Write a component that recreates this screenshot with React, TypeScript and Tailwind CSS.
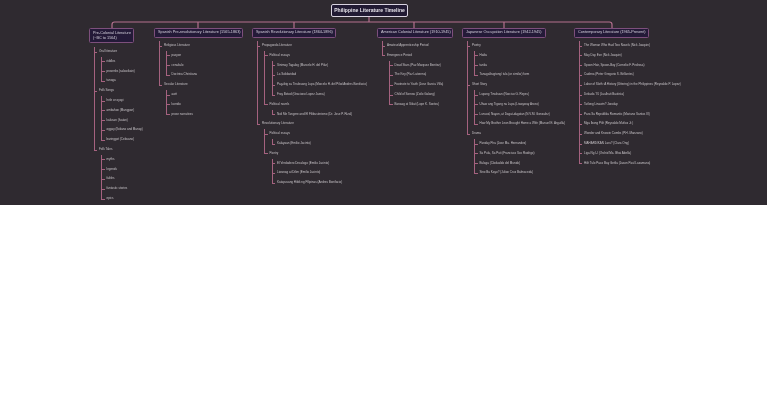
type Item = { label: string; children?: Item[] };
type Period = { title: string; items: Item[]; width: string; headerWidth: string; twoLine?: boolean };

const leaf = (...labels: string[]): Item[] => labels.map((label) => ({ label }));

const periods: Period[] = [
  {
    title: "Pre-Colonial Literature\n(~BC to 1564)",
    width: "w-[65px]",
    headerWidth: "w-[45px]",
    twoLine: true,
    items: [
      { label: "Oral literature", children: leaf("riddles", "proverbs (salawikain)", "tanaga") },
      {
        label: "Folk Songs",
        children: leaf("hele or oyayi", "ambahan (Mangyan)", "kalusan (Ivatan)", "oggay (Ilokano and Manay)", "baringgot (Cebuano)"),
      },
      { label: "Folk Tales", children: leaf("myths", "legends", "fables", "fantastic stories", "epics") },
    ],
  },
  {
    title: "Spanish Pre-revolutionary Literature (1565-1863)",
    width: "w-[98px]",
    headerWidth: "w-[89px]",
    items: [
      { label: "Religious Literature", children: leaf("pasyon", "cenakulo", "Doctrina Christiana") },
      { label: "Secular Literature", children: leaf("awit", "korrido", "prose narratives") },
    ],
  },
  {
    title: "Spanish Revolutionary Literature (1864-1896)",
    width: "w-[125px]",
    headerWidth: "w-[84px]",
    items: [
      {
        label: "Propaganda Literature",
        children: [
          {
            label: "Political essays",
            children: leaf(
              "Sinimay Tagalog (Marcelo H. del Pilar)",
              "La Solidaridad",
              "Pag-ibig sa Tinubuang Lupa (Marcelo H. del Pilar/Andres Bonifacio)",
              "Fray Botod (Graciano Lopez Jaena)",
            ),
          },
          { label: "Political novels", children: leaf("Noli Me Tangere and El Filibusterismo (Dr. Jose P. Rizal)") },
        ],
      },
      {
        label: "Revolutionary Literature",
        children: [
          { label: "Political essays", children: leaf("Kalayaan (Emilio Jacinto)") },
          {
            label: "Poetry",
            children: leaf(
              "El Verdadero Decalogo (Emilio Jacinto)",
              "Liwanag at Dilim (Emilio Jacinto)",
              "Katapusang Hibik ng Pilipinas (Andres Bonifacio)",
            ),
          },
        ],
      },
    ],
  },
  {
    title: "American Colonial Literature (1910-1945)",
    width: "w-[85px]",
    headerWidth: "w-[76px]",
    items: [
      { label: "Amateur/Apprenticeship Period" },
      {
        label: "Emergence Period",
        children: leaf(
          "Dead Stars (Paz Marquez Benitez)",
          "The Key (Paz Latorena)",
          "Footnote to Youth (Jose Garcia Villa)",
          "Child of Sorrow (Zoilo Galang)",
          "Banaag at Sikat (Lope K. Santos)",
        ),
      },
    ],
  },
  {
    title: "Japanese Occupation Literature (1942-1945)",
    width: "w-[112px]",
    headerWidth: "w-[84px]",
    items: [
      { label: "Poetry", children: leaf("Haiku", "tanka", "Tanaga/bugtong/ tula (or similar) form") },
      {
        label: "Short Story",
        children: leaf(
          "Lupang Tinubuan (Narciso G. Reyes)",
          "Uhaw ang Tigang na Lupa (Liwayway Arceo)",
          "Lunsod, Nayon, at Dagat-dagatan (N.V.M. Gonzalez)",
          "How My Brother Leon Brought Home a Wife (Manuel E. Arguilla)",
        ),
      },
      {
        label: "Drama",
        children: leaf(
          "Panday Pira (Jose Ma. Hernandez)",
          "Sa Pula, Sa Puti (Francisco Soc Rodrigo)",
          "Bulaga (Clodualdo del Mundo)",
          "Sino Ba Kayo? (Julian Cruz Balmaceda)",
        ),
      },
    ],
  },
  {
    title: "Contemporary Literature (1965-Present)",
    width: "w-[120px]",
    headerWidth: "w-[75px]",
    items: leaf(
      "The Woman Who Had Two Navels (Nick Joaquin)",
      "May Day Eve (Nick Joaquin)",
      "Spoon Hair, Spoon-Boy (Cornelio F. Pedrosa)",
      "Cadena (Peter Gregorio S. Brillantes)",
      "Labor of Sloth: A History (Uttering) in the Philippines (Reynaldo P. Lopez)",
      "Dekada '70 (Lualhati Bautista)",
      "Tatlong Linawin? Janolap",
      "Para Sa Republika Romantic (Mariano Santos III)",
      "Mga Ibong Pilit (Reynaldo Muñoz Jr.)",
      "Wonder and Knowin Combs (P.H. Manzano)",
      "MAHARDIKAN Laru? (Clara Ong)",
      "Liga Ng I-I (Orchid Ma. Bhai Abella)",
      "Hilit Tulo Paco Bay Getila (Jason Paul Laxamana)",
    ),
  },
];

function Branch({ items, nested }: { items: Item[]; nested?: boolean }) {
  return (
    <ul className={nested ? "ml-[2px]" : "ml-[4.5px]"}>
      {items.map((item, i) => (
        <li key={`${item.label}-${i}`} className="relative pl-[5.5px]">
          {/* elbow: the last child stops its spine at its own row */}
          <span className={`absolute left-0 top-0 w-[0.9px] bg-[#a5627f] ${i === items.length - 1 ? "h-[5.4px]" : "h-full"}`} />
          <span className="absolute left-0 top-[4.7px] h-[0.7px] w-[3.5px] bg-[#a5627f]" />
          <div className="h-[9.8px] whitespace-nowrap text-[3px] leading-[9.8px] text-[#c6c2c6]">{item.label}</div>
          {item.children && <Branch items={item.children} nested />}
        </li>
      ))}
    </ul>
  );
}

export default function App() {
  return (
    <div className="h-[205px] w-[767px] overflow-hidden bg-[#2f2a30] pt-[4px] font-['Liberation_Sans',sans-serif]">
      <div className="blur-[0.3px]">
        <div className="ml-[331px] flex h-[13px] w-[77px] items-center justify-center rounded-[2px] border-[0.8px] border-[#d9d3e0] bg-[#211a33] text-[5.05px] font-bold text-[#e6e3ea]">
          Philippine Literature Timeline
        </div>
        <svg width="767" height="11" className="block" fill="none" stroke="#b5708e" strokeWidth="1.2">
          <path d="M369 0V5M112 11V7.5Q112 5 114.5 5H609.5Q612 5 612 7.5V11M198 5V11M294 5V11M414 5V11M504 5V11" />
        </svg>
        <div className="ml-[89px] flex items-start">
          {periods.map((period) => (
            <section key={period.title} className={`shrink-0 ${period.width}`}>
              <h2
                className={`${period.headerWidth} rounded-[1.5px] border-[0.8px] border-[#7d4f7c] bg-[#241a38] px-[3px] font-normal text-[#d4d0dc] ${
                  period.twoLine
                    ? "mb-[1.5px] h-[14.5px] whitespace-pre py-[1.5px] text-[3.8px] leading-[5.2px]"
                    : "flex h-[10px] items-center whitespace-nowrap text-[3.8px]"
                }`}
              >
                {period.title}
              </h2>
              <div className="pt-[3px]">
                <Branch items={period.items} />
              </div>
            </section>
          ))}
        </div>
      </div>
    </div>
  );
}
